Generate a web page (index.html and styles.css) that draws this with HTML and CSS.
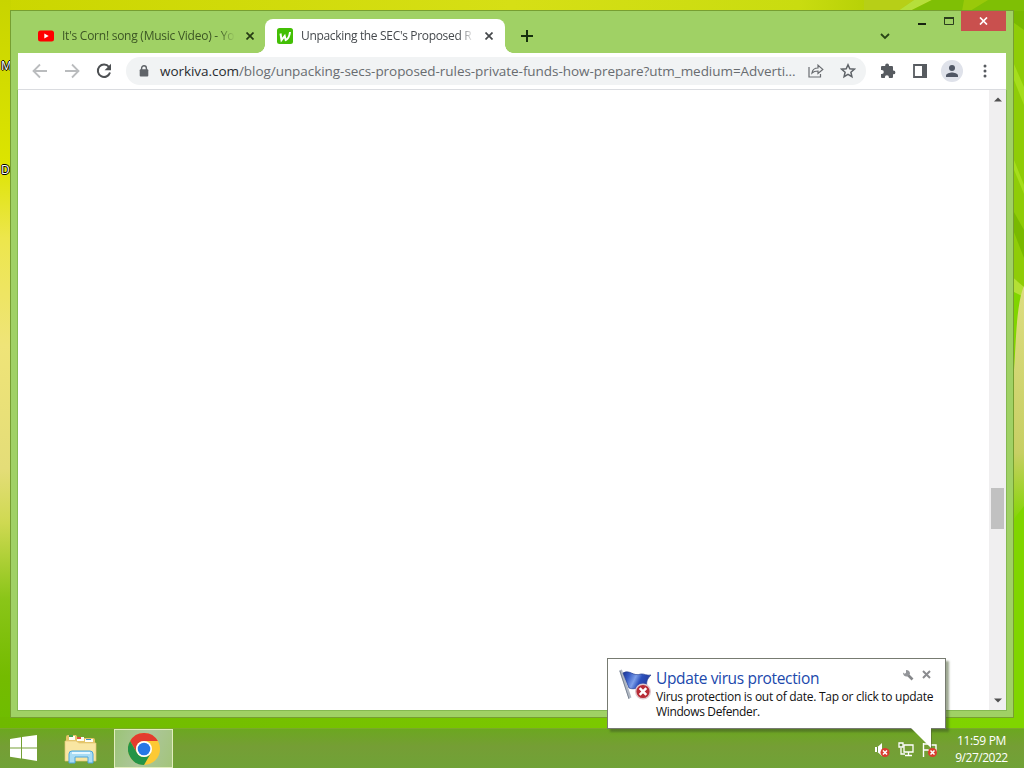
FILE: index.html
```html
<!DOCTYPE html>
<html lang="en">
<head>
<meta charset="utf-8">
<title>Desktop</title>
<link rel="stylesheet" href="styles.css">
</head>
<body>
<div class="desktop">
  <div class="wall-left"></div>
  <div class="wall-bottom"></div>
  <svg class="wall-right" width="14" height="728" viewBox="0 0 14 728">
    <defs><linearGradient id="sand" x1="0" y1="0" x2="0" y2="1"><stop offset="0" stop-color="#dddd82"/><stop offset=".7" stop-color="#c7cf64"/><stop offset="1" stop-color="#80d500"/></linearGradient></defs>
    <path fill="#80d500" d="M0 0h14v728H0z"/>
    <path fill="#8fcc08" d="M0 0h14v290L0 275z"/>
    <path fill="#79b900" d="M0 0h14v30L0 20z"/>
    <path fill="#a5dd1c" d="M0 55l14 32v18L0 70zM0 150l14 35v9L0 160z"/>
    <path fill="#79b900" d="M0 205l14 25v28L0 222z"/>
    <path fill="#b4df35" d="M0 275l14 12v10L0 290z"/>
    <path fill="url(#sand)" d="M14 286c-8 18-8 60-10 84L0 380v144l14-18z"/>
  </svg>
  <svg class="wall-top" width="160" height="11" viewBox="0 0 160 11"><path d="M0 0h50L34 11H0z" fill="#b7cf17"/><path d="M50 0h18L46 11H34z" fill="#b6df3b"/><path d="M68 0h92v11H46z" fill="#7fbf05"/><path d="M100 0h24l-18 11H98z" fill="#99c90a"/></svg>
  <span class="desk-label label-m">M</span>
  <span class="desk-label label-d">D</span>

  <main class="window">
    <header class="titlebar">
      <div class="tab">
        <svg width="16" height="12" viewBox="0 0 16 12"><rect width="16" height="11" y=".5" rx="2.5" fill="#f00"/><path d="M6.300 3.500v5L10.700 6z" fill="#fff"/></svg>
        <span class="tab-title first">It's Corn! song (Music Video) - Yo</span>
        <svg class="tab-x" width="8" height="8" viewBox="0 0 8 8"><path d="M.5.5l7 7m0-7l-7 7" stroke="#263b14" stroke-width="1.700"/></svg>
      </div>
      <div class="tab active">
        <svg width="16" height="16" viewBox="0 0 16 16"><rect width="16" height="16" rx="2.500" fill="#43bf05"/><path d="M3.500 5.500l1 6.500 3.200-4 1 4c2.500-1 3.800-4 4.300-8" fill="none" stroke="#fff" stroke-width="2"/></svg>
        <span class="tab-title second">Unpacking the SEC's Proposed R</span>
        <svg class="tab-x" width="8" height="8" viewBox="0 0 8 8"><path d="M.5.5l7 7m0-7l-7 7" stroke="#45484b" stroke-width="1.700"/></svg>
      </div>
      <svg class="new-tab" width="12" height="12" viewBox="0 0 12 12"><path d="M6 0v12M0 6h12" stroke="#15300d" stroke-width="2"/></svg>
      <svg class="tab-search" width="10" height="7" viewBox="0 0 10 7"><path d="M1 1l4 4 4-4" fill="none" stroke="#284515" stroke-width="1.800"/></svg>
      <div class="controls">
        <svg class="min" width="8" height="3" viewBox="0 0 8 3"><path d="M0 0h8v2H0z" fill="#17220f"/></svg>
        <svg class="max" width="10" height="8" viewBox="0 0 10 8"><path d="M.5 1h9v6.500h-9z" fill="none" stroke="#2b3d1e"/><path d="M0 0h10v2H0z" fill="#2b3d1e"/></svg>
        <div class="close"><svg width="9" height="8" viewBox="0 0 9 8"><path d="M1 .5l7 7m0-7l-7 7" stroke="#fff" stroke-width="1.700"/></svg></div>
      </div>
    </header>
    <nav class="toolbar">
      <svg class="back" width="16" height="16" viewBox="0 0 16 16"><path d="M15 8H2m6-6.500L1.500 8 8 14.500" fill="none" stroke="#babcbe" stroke-width="1.800"/></svg>
      <svg class="forward" width="16" height="16" viewBox="0 0 16 16"><path d="M1 8h13M8 1.500L14.500 8 8 14.500" fill="none" stroke="#babcbe" stroke-width="1.800"/></svg>
      <svg class="reload" width="16" height="16" viewBox="0 0 16 16"><path d="M13 4A6.200 6.200 0 1 0 14 9.500" fill="none" stroke="#4d5053" stroke-width="2"/><path d="M15 .8v6.400H8.600z" fill="#4d5053"/></svg>
      <div class="omnibox">
        <svg width="10" height="12" viewBox="0 0 10 12"><path d="M2.600 5V3.200a2.400 2.400 0 0 1 4.800 0V5" fill="none" stroke="#5f6368" stroke-width="1.400"/><rect x=".7" y="4.200" width="8.600" height="7.300" rx="1" fill="#5f6368"/></svg>
        <span class="url"><b>workiva.com</b>/blog/unpacking-secs-proposed-rules-private-funds-how-prepare?utm_medium=Adverti...</span>
        <svg class="share" width="16" height="14" viewBox="0 0 16 14"><path d="M1 3v10h11.500v-3M4 9c.5-3.500 2.500-5 6-5V1.200L14.800 5.400 10 9.500V7C7.500 7 5.500 7.500 4 9z" fill="none" stroke="#696c70" stroke-width="1.200"/></svg>
        <svg class="star" width="16" height="16" viewBox="0 0 16 16"><path d="M8 1.800l1.800 4 4.500.4-3.400 3 1 4.400L8 11.300l-3.900 2.300 1-4.400-3.400-3 4.500-.4z" fill="none" stroke="#5f6368" stroke-width="1.500"/></svg>
      </div>
      <svg class="puzzle" width="16" height="16" viewBox="0 0 16 16"><path fill="#575b60" d="M13.500 7.500H13V4.300C13 3.500 12.500 3 11.700 3H9V2.300a1.900 1.900 0 0 0-3.800 0V3H2.300C1.500 3 1 3.500 1 4.300V7h.8a2 2 0 0 1 0 4H1v2.700c0 .8.500 1.300 1.300 1.300h2.600v-.8a2 2 0 0 1 4 0v.8h2.800c.8 0 1.300-.5 1.300-1.300v-2.400h.5a1.900 1.900 0 0 0 0-3.800z"/></svg>
      <svg class="panel" width="14" height="14" viewBox="0 0 14 14"><path d="M1 1h12v12H1z" fill="#fff" stroke="#575b60" stroke-width="1.800"/><path d="M9 0h5v14H9z" fill="#575b60"/></svg>
      <svg class="profile" width="22" height="22" viewBox="0 0 22 22"><circle cx="11" cy="11" r="11" fill="#dfe2ea"/><circle cx="11" cy="8" r="3" fill="#505765"/><path d="M5 17v-1.500c0-2 4-3 6-3s6 1 6 3V17z" fill="#505765"/></svg>
      <svg class="menu" width="4" height="14" viewBox="0 0 4 14"><g fill="#575b60"><circle cx="2" cy="2" r="1.500"/><circle cx="2" cy="7" r="1.500"/><circle cx="2" cy="12" r="1.500"/></g></svg>
    </nav>
    <section class="page">
      <div class="scrollbar">
        <svg width="8" height="5" viewBox="0 0 8 5"><path d="M0 4.500L4 .5l4 4z" fill="#505050"/></svg>
        <div class="thumb"></div>
        <svg class="down" width="8" height="5" viewBox="0 0 8 5"><path d="M0 .5l4 4 4-4z" fill="#505050"/></svg>
      </div>
    </section>
  </main>

  <footer class="taskbar">
    <svg class="start" width="27" height="26" viewBox="0 0 27 26"><path fill="#fff" d="M0 4l11-1.700v10.100H0zM12 2.100L27 0v12.400H12zM0 13.500h11v9.900L0 21.800zM12 13.500h15V26l-15-2.400z"/></svg>
    <svg class="explorer" width="34" height="32" viewBox="0 0 34 32">
      <path d="M2 28V4q0-2 2-2h8l2 3h15q2 0 2 2v21z" fill="#e5c568"/>
      <path d="M5 3h6v4H5zM13 4h7v4h-7zM21 6h8v3h-8z" fill="#fffdf2"/>
      <path d="M5 2h4v2H5z" fill="#43a447"/><path d="M13 4h4v2h-4z" fill="#dc5142"/><path d="M22 6h5v1h-5z" fill="#3f8cca"/>
      <path d="M1 8h11l3 2h17v18H1z" fill="#f9e6a2" stroke="#e3c575" stroke-width=".7"/>
      <path d="M5 30V21q0-3 3-3h18q3 0 3 3v9h-5v-6H11v6z" fill="#a9dcf4" stroke="#4ca6dc"/><path d="M8 20h18" stroke="#e6f8ff" stroke-width="2"/>
    </svg>
    <div class="task-active">
      <svg width="32" height="32" viewBox="0 0 32 32"><circle cx="16" cy="16" r="16" fill="#fcc934"/><path d="M2.140 8A16 16 0 0 1 29.860 8H16a8 8 0 0 0-6.930 12z" fill="#e33b2e"/><path d="M2.140 8A16 16 0 0 0 16 32l6.930-12A8 8 0 0 1 9.070 20z" fill="#249447"/><circle cx="16" cy="16" r="8" fill="#fff"/><circle cx="16" cy="16" r="6.300" fill="#2878e5"/></svg>
    </div>
    <div class="tray">
      <svg width="16" height="16" viewBox="0 0 16 16"><path d="M1 5h2.500L8 1v13l-4.500-4H1z" fill="#fff"/><path d="M3.500 5v5" stroke="#668e3c"/><circle cx="11" cy="10.500" r="4.500" fill="#d93d2e"/><path d="M9 8.500l4 4m0-4l-4 4" stroke="#fff" stroke-width="1.500"/></svg>
      <svg width="16" height="16" viewBox="0 0 16 16"><path d="M6 3h9v7H6zM10.500 10v3M7 13.500h7M3 6v6h4" fill="none" stroke="#fff" stroke-width="1.300"/><path d="M1 1h4v4H1z" fill="#638c36" stroke="#fff" stroke-width="1.300"/></svg>
      <svg width="16" height="16" viewBox="0 0 16 16"><path d="M1.500 1v14M2 2h5l2 1h5v6H8L6 8H2" fill="none" stroke="#fff" stroke-width="1.400"/><circle cx="10.500" cy="10.500" r="4.500" fill="#d93d2e"/><path d="M8.500 8.500l4 4m0-4l-4 4" stroke="#fff" stroke-width="1.500"/></svg>
    </div>
    <div class="clock"><span class="time">11:59 PM</span><span class="date">9/27/2022</span></div>
  </footer>

  <aside class="notice">
    <svg class="flag" width="34" height="32" viewBox="0 0 34 32">
      <defs><linearGradient id="blue" x1="0" y1="0" x2="1" y2=".3"><stop stop-color="#1c3390"/><stop offset=".25" stop-color="#365bc4"/><stop offset=".5" stop-color="#7d9fe9"/><stop offset=".7" stop-color="#2b50bd"/><stop offset="1" stop-color="#253e9f"/></linearGradient></defs>
      <path d="M1.500 1l9.500 28" stroke="#b1b8c3" stroke-width="3"/><path d="M1 2l9 28" stroke="#6b7686" stroke-width=".8"/>
      <path d="M4 4c7-4 10 4 18 1 3-.5 6 2 10 1-4 4-5 7-4 12-7-3-10 4-18 1z" fill="url(#blue)" stroke="#203b8f" stroke-width=".7"/>
      <circle cx="24" cy="22.500" r="7.300" fill="#b72b36" stroke="#dfc6cb" stroke-width="1.400"/><path d="M20.700 19.200l6.600 6.600m0-6.600l-6.600 6.600" stroke="#fff" stroke-width="2.500"/>
    </svg>
    <div class="notice-copy"><h1>Update virus protection</h1><p><span class="line-one">Virus protection is out of date. Tap or click to update</span><span class="line-two">Windows Defender.</span></p></div>
    <div class="notice-actions">
      <svg width="11" height="11" viewBox="0 0 11 11"><path d="M4 4l5.500 5.500" stroke="#85878a" stroke-width="2.600"/><path d="M3 0v2.700L1.800 3.800 0 2.500c0 3 2 4.500 4.500 4L7 4C7.200 1.500 5.500 0 3 0z" fill="#94969a"/></svg>
      <svg width="9" height="9" viewBox="0 0 9 9"><path d="M1 1l7 7m0-7L1 8" stroke="#8b8c8f" stroke-width="2"/></svg>
    </div>
    <svg class="tail" width="24" height="22" viewBox="0 0 24 22"><path d="M0 0h20v20z" fill="#fff"/><path d="M20.500 2v18" stroke="#53652e" stroke-opacity=".6"/></svg>
  </aside>
</div>
</body>
</html>
```

FILE: styles.css
```css
* { box-sizing: border-box; }
body { margin: 0; overflow: hidden; font-family: "Open Sans", "Noto Sans", sans-serif; }
svg { display: block; flex: none; }
.desktop { position: relative; width: 1024px; height: 768px; overflow: hidden; background: linear-gradient(90deg, #cbd600 0, #d6df15 50%, #c9dc10 78%, #a8c800 90%, #77b900 100%); }
.wall-left { position: absolute; inset: 0 auto 0 0; width: 11px; background: linear-gradient(#c8d400 0, #dce400 21%, #ede64c 31%, #efe478 45%, #e4dd78 61%, #cfd952 68%, #8ac518 78%, #74bb00 88%, #6ebd00 95%); }
.wall-bottom { position: absolute; left: 0; right: 0; top: 717px; height: 11px; background: linear-gradient(90deg, #6fb900, #7ac600 50%, #80d500); }
.wall-right { position: absolute; left: 1010px; top: 0; }
.wall-top { position: absolute; left: 864px; top: 0; }
.desk-label { position: absolute; left: 1px; color: #fff; font-size: 12px; line-height: 16px; text-shadow: 1px 0 #000, -1px 0 #000, 0 1px #000, 0 -1px #000; }
.label-m { top: 58px; }
.label-d { top: 162px; }
.window { position: absolute; left: 10px; top: 10px; width: 1004px; height: 708px; display: flex; flex-direction: column; padding: 0 7px 7px; border: 1px solid #779f31; background: #a0d165; }
.titlebar { display: flex; align-items: flex-start; height: 42px; padding-left: 8px; }
.tab { display: flex; align-items: center; width: 239px; height: 34px; margin-top: 8px; padding-left: 12px; }
.tab.active { position: relative; width: 240px; border-radius: 8px 8px 0 0; background: #fff; }
.tab.active::before, .tab.active::after { content: ""; position: absolute; bottom: 0; width: 8px; height: 8px; }
.tab.active::before { left: -8px; background: radial-gradient(circle at 0 0, transparent 7.5px, #fff 8px); }
.tab.active::after { right: -8px; background: radial-gradient(circle at 100% 0, transparent 7.5px, #fff 8px); }
.tab-title { width: 173px; margin-left: 8px; white-space: nowrap; font-size: 12px; line-height: 20px; mask-image: linear-gradient(90deg, #000 91%, transparent); }
.first { letter-spacing: -.25px; color: #3c5624; }
.second { letter-spacing: -.33px; color: #45494d; }
.tab-x { margin-left: 11px; }
.new-tab { margin: 19px 0 0 16px; }
.tab-search { margin: 22px 0 0 347px; }
.controls { display: flex; align-items: flex-start; margin: 0 -1px 0 auto; }
.min { margin: 12px 18px 0 0; }
.max { margin: 6px 8px 0 0; }
.close { display: flex; justify-content: center; align-items: center; width: 45px; height: 20px; margin-right: 1px; background: #c9504e; }
.controls .min, .controls .max { transform: translateX(1px); }
.toolbar { display: flex; align-items: center; height: 37px; flex: none; background: #fff; border-bottom: 1px solid #dadce0; padding-left: 14px; }
.forward { margin-left: 16px; }
.reload { margin-left: 16px; }
.omnibox { display: flex; align-items: center; width: 740px; height: 28px; margin-left: 14px; padding-left: 13px; border-radius: 14px; background: #f1f3f4; }
.url { width: 638px; margin-left: 11px; white-space: nowrap; color: #686c70; font-size: 13.500px; line-height: 22px; letter-spacing: -.05px; }
.url b { font-weight: 400; color: #292c30; }
.share { margin-left: 10px; }
.star { margin-left: 16px; }
.puzzle { margin-left: 14px; }
.panel { margin-left: 17px; }
.profile { margin-left: 14px; }
.menu { margin-left: 20px; }
.page { display: flex; justify-content: flex-end; flex: 1; background: #fff; box-shadow: 0 0 0 1px #85b951; clip-path: inset(0 -1px -1px); }
.scrollbar { display: flex; flex-direction: column; align-items: center; width: 17px; padding: 7px 0; background: #f0eff0; }
.thumb { width: 13px; height: 41px; margin-top: 386px; background: #c1c1c1; }
.down { margin-top: auto; }
.taskbar { position: absolute; inset: 728px 0 0; display: flex; align-items: center; padding-left: 10px; background: linear-gradient(#6ca720, #759e35 45%, #70a237); border-top: 1px solid #7baa2a; }
.start { margin-bottom: 1px; }
.explorer { margin-left: 27px; }
.task-active { display: flex; align-items: center; justify-content: center; width: 59px; height: 39px; margin-left: 16px; border: 1px solid #e1edbd; background: linear-gradient(110deg, #9bc477, #adc69b 50%, #a3c47b); }
.tray { display: flex; gap: 8px; margin: 2px 0 0 701px; }
.clock { display: flex; flex-direction: column; align-items: center; width: 57px; margin: 0 0 0 15px; color: #fff; font-size: 12px; line-height: 17px; white-space: nowrap; }
.time { letter-spacing: -.32px; }
.date { letter-spacing: -.48px; }
.notice { position: absolute; left: 607px; top: 658px; display: flex; width: 339px; height: 71px; padding: 10px 10px 0 11px; background: #fff; border: 1px solid #777b71; box-shadow: 3px 3px 2px #40522880; }
.notice-copy { margin-left: 3px; color: #111; }
.notice h1 { margin: 0; color: #2048ac; font-size: 15.500px; font-weight: 400; line-height: 19px; letter-spacing: -.35px; white-space: nowrap; }
.notice p { display: flex; flex-direction: column; width: 280px; margin: 1px 0 0; font-size: 12px; line-height: 15px; white-space: nowrap; }
.line-one { letter-spacing: -.275px; }
.line-two { letter-spacing: -.36px; }
.notice-actions { position: absolute; right: 14px; top: 11px; display: flex; gap: 8px; }
.tail { position: absolute; left: 303px; top: 69px; }
```
